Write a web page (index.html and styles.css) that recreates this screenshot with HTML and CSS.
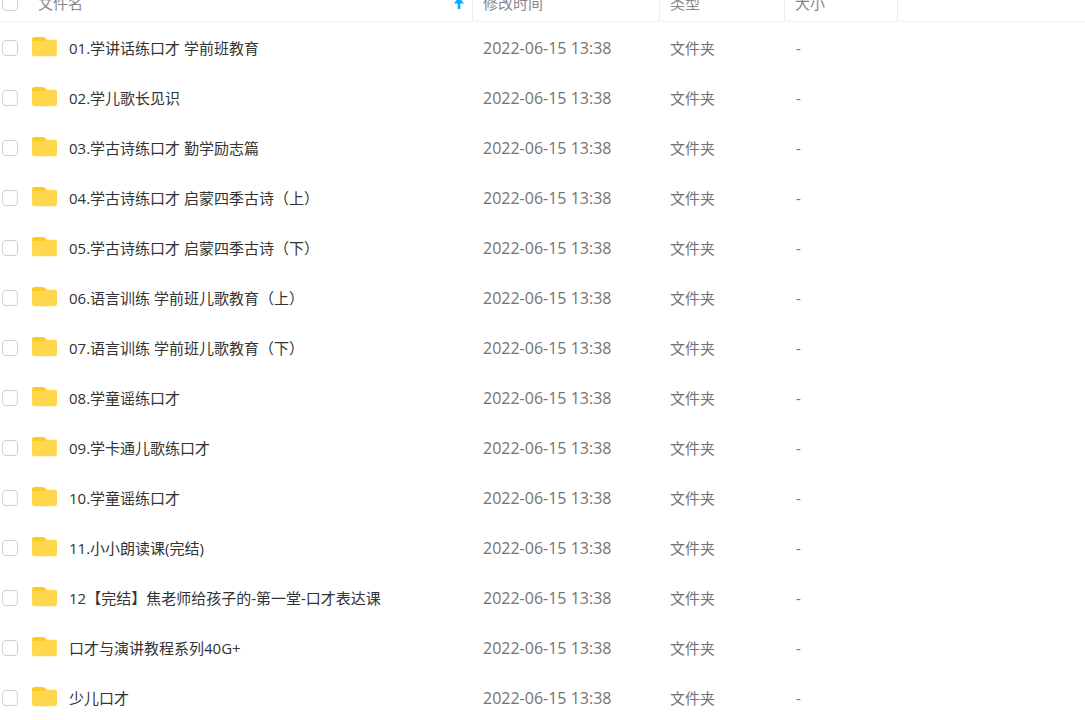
FILE: index.html
```html
<!DOCTYPE html>
<html lang="zh-CN">
<head>
<meta charset="utf-8">
<meta name="viewport" content="width=device-width, initial-scale=1">
<title>文件列表</title>
<link rel="stylesheet" href="styles.css">
</head>
<body>
<svg class="symbols" aria-hidden="true">
  <symbol id="folder" viewBox="0 0 26 20">
    <path fill="#ffc928" d="M0 2.5Q0 0 2.5 0H10.5Q12 0 13 1L15.5 3.2V9H0Z"/>
    <path fill="#ffd84d" d="M0 5.5Q0 4 2 4H10.5Q12 4 13 3.4Q14 2.8 15 2.8H23Q25 2.8 25 4.8V17Q25 19.3 22.7 19.3H2.3Q0 19.3 0 17Z"/>
  </symbol>
</svg>
<main class="viewport">
<table class="files">
  <colgroup>
    <col><col class="col-time"><col class="col-type"><col class="col-size"><col class="col-rest">
  </colgroup>
  <thead>
    <tr>
      <th scope="col"><div class="name head-name"><input class="check" type="checkbox" id="all"><label for="all">文件名</label>
        <svg class="sort" viewBox="0 0 10 12" aria-hidden="true"><path fill="#09aaff" d="M5 0L10 6.5H6.3V12H3.7V6.5H0Z"/></svg></div></th>
      <th scope="col">修改时间</th>
      <th scope="col">类型</th>
      <th scope="col">大小</th>
      <th></th>
    </tr>
  </thead>
  <tbody id="rows"></tbody>
</table>
</main>
<script src="files.js"></script>
</body>
</html>
```
FILE: styles.css
```css
* {
  box-sizing: border-box;
}

body {
  margin: 0;
  background: #fff;
  color: #333;
  font: 15px/20px "Open Sans", "Noto Sans CJK SC", sans-serif;
}

.symbols {
  position: absolute;
  width: 0;
  height: 0;
}

.viewport {
  height: 100vh;
  overflow: hidden;
}

.files {
  width: 100%;
  margin-top: -16px;
  border-collapse: separate;
  border-spacing: 0;
  table-layout: fixed;
}

.col-time,
.col-rest {
  width: 187px;
}

.col-type {
  width: 125px;
}

.col-size {
  width: 113px;
}

.files th,
.files td {
  padding: 0 10px;
  text-align: left;
  font-weight: 400;
  vertical-align: middle;
  white-space: nowrap;
}

.files th {
  height: 38px;
  border-right: 1px solid #ebecf0;
  border-bottom: 1px solid #f2f3f6;
  color: #888;
}

.files th:last-child {
  border-right: 0;
}

.files td {
  height: 50px;
  padding-top: 2px;
  color: #737373;
}

.files .time {
  font-size: 16px;
}

.files th:first-child,
.files td:first-child {
  padding-right: 8px;
  padding-left: 2px;
}

.files td:first-child {
  color: #333;
}

.files td:nth-child(4) {
  padding-left: 11px;
}

.name {
  display: flex;
  align-items: center;
}

.check {
  appearance: none;
  flex: none;
  width: 16px;
  height: 16px;
  margin: 0;
  border: 1px solid #d0d0d0;
  border-radius: 4px;
  background: #fff;
}

.check:checked {
  border-color: #09aaff;
  background: #09aaff;
}

.head-name label {
  margin-left: 20px;
}

.sort {
  width: 10px;
  height: 12px;
  margin-left: auto;
}

.folder {
  flex: none;
  width: 26px;
  height: 20px;
  margin: 0 11px 2px 14px;
}
```
FILE: files.js
```js
const names = [
  "01.学讲话练口才 学前班教育",
  "02.学儿歌长见识",
  "03.学古诗练口才 勤学励志篇",
  "04.学古诗练口才 启蒙四季古诗（上）",
  "05.学古诗练口才 启蒙四季古诗（下）",
  "06.语言训练 学前班儿歌教育（上）",
  "07.语言训练 学前班儿歌教育（下）",
  "08.学童谣练口才",
  "09.学卡通儿歌练口才",
  "10.学童谣练口才",
  "11.小小朗读课(完结)",
  "12【完结】焦老师给孩子的-第一堂-口才表达课",
  "口才与演讲教程系列40G+",
  "少儿口才"
];

document.getElementById("rows").innerHTML = names.map((name, i) => `
  <tr>
    <td><div class="name"><input class="check" type="checkbox" id="f${i}"><svg class="folder" aria-hidden="true"><use href="#folder"/></svg><label for="f${i}">${name}</label></div></td>
    <td class="time">2022-06-15 13:38</td>
    <td>文件夹</td>
    <td>-</td>
    <td></td>
  </tr>`).join("");
```
